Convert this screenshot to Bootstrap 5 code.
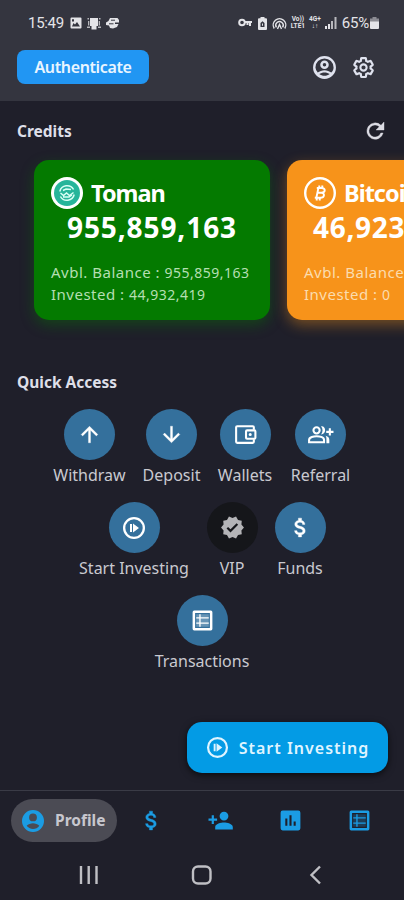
<!DOCTYPE html>
<html lang="en">
<head>
<meta charset="utf-8">
<meta name="viewport" content="width=device-width, initial-scale=1">
<title>Profile</title>
<link rel="stylesheet" href="https://cdn.jsdelivr.net/npm/bootstrap@5.3.0/dist/css/bootstrap.min.css">
<style>
body{background:#1f1f2a;font-family:"Noto Sans","Open Sans",sans-serif;color:#dcdce4}
svg{display:block;flex:none}
svg:not([fill]){fill:currentColor}
.screen{width:404px;height:900px}
.top-area{height:101px;background:#34353f}
.status{height:46px;padding:0 25px 0 28px;font:15px/46px Roboto,sans-serif;color:#e4e4e8}
.status-time{width:36px;margin-right:6px;letter-spacing:-.3px}
.status svg+svg{margin-left:5px}
.net-label{font:bold 6.5px/7px Roboto,sans-serif;text-align:center;margin-left:4px}
.battery-text{margin:0 1px 0 5px;letter-spacing:-.2px}
.head-row{margin-top:4px}
.auth-btn{width:132px;height:34px;margin-left:17px;border-radius:8px;background:#2196f3;color:#e9f5ff;font-size:16px;font-weight:600;letter-spacing:-.36px}
.auth-btn:hover{background:#1e88e5;color:#fff}
.head-icons{gap:14px;margin-right:28px;color:#dfe2ee}
.sec-title{font-size:15.5px;font-weight:700;line-height:22px;margin:0 0 0 17px;color:#dedfe8}
.credits-head{height:59px;padding-right:17px}
.cards{gap:17px;padding-left:34px;height:160px}
.fund{flex:none;width:236px;height:160px;border-radius:15px;padding:16px 17px;color:#fff}
.fund svg{margin-top:1px}
.fund-green{background:#047a00;box-shadow:0 5px 14px rgba(4,122,0,.4)}
.fund-orange{background:#f7931a;box-shadow:0 5px 14px rgba(247,147,26,.4)}
.fund-name{font-size:23.5px;font-weight:700;line-height:34px;margin-left:8px;letter-spacing:-1px}
.fund-sum{font-size:28px;font-weight:700;line-height:34px;letter-spacing:.9px;text-align:center;white-space:nowrap}
.fund-orange .fund-sum{text-align:left;padding-left:9px;letter-spacing:.7px}
.fund-info{font-size:15px;line-height:21.5px;margin-top:18px;white-space:nowrap;letter-spacing:.5px}
.fund-green .fund-info{color:#b5dfb2}
.fund-orange .fund-info{color:#fbdcae}
.fund-info small{font-size:14px;letter-spacing:.5px}
.quick-area{margin-top:51px}
.quick{gap:17px;height:93px}
.quick-item{height:93px}
.disc{width:51px;height:51px;border-radius:50%;background:#34709c;color:#fff}
.disc-dark{background:#15161a;color:#b4b4b7}
.quick-label{font-size:16px;line-height:22px;margin-top:4px;white-space:nowrap;color:#c9c9d0}
.w57{width:57px}.w73{width:73px}.w56{width:56px}.w61{width:61px}.w111{width:111px}.w51{width:51px}
.invest-btn{width:201px;height:51px;margin:34px 16px 0 0;border-radius:15px;background:#039be5;color:#dff4ff;box-shadow:0 2px 7px rgba(0,0,0,.65);font-size:16px;font-weight:600;letter-spacing:1px;gap:10px}
.invest-btn:hover{background:#0288d1;color:#fff}
.tabs{height:60px;margin-top:17px;border-top:1px solid #3a3b46;padding:0 32px 0 11px;color:#1b9ce3}
.tab-on{width:106px;height:43px;border-radius:22px;background:#4b4b54;font-size:15.5px;font-weight:700;padding-left:10px;gap:10px}
.tab-on span{color:#c7c7ce}
.tab-icons{gap:44.5px}
.sysbar{height:49px;color:#bfbfc4}
</style>
</head>
<body>
<svg width="0" height="0" class="position-absolute">
<defs>
<symbol id="i-play" viewBox="0 0 24 24"><path fill-rule="evenodd" d="M12 1a11 11 0 1 0 0 22 11 11 0 0 0 0-22zm0 2.300a8.700 8.700 0 1 1 0 17.400 8.700 8.700 0 0 1 0-17.400z"/><path d="M8 8h2v8H8zM11 7.500v9l6-4.500z"/></symbol>
<symbol id="i-dollar" viewBox="0 0 24 24"><path stroke="currentColor" stroke-width=".4" d="M11.800 10.900c-2.270-.59-3-1.200-3-2.150 0-1.090 1.010-1.850 2.700-1.850 1.780 0 2.440.85 2.500 2.100h2.210c-.07-1.720-1.120-3.300-3.210-3.810V3h-3v2.160c-1.940.42-3.500 1.680-3.500 3.610 0 2.310 1.910 3.460 4.700 4.130 2.500.6 3 1.480 3 2.410 0 .69-.49 1.790-2.700 1.790-2.060 0-2.870-.92-2.980-2.100h-2.200c.12 2.190 1.760 3.420 3.680 3.830V21h3v-2.150c1.950-.37 3.500-1.500 3.500-3.550 0-2.840-2.430-3.810-4.700-4.400z"/></symbol>
<symbol id="i-list" viewBox="0 0 24 24"><path fill-rule="evenodd" d="M4 2.500h16A1.500 1.500 0 0 1 21.500 4v16a1.500 1.500 0 0 1-1.500 1.500H4A1.500 1.500 0 0 1 2.500 20V4A1.500 1.500 0 0 1 4 2.500zM4.900 4.900v14.200h14.200V4.900z"/><path d="M6 6h12v12H6z" opacity=".25"/><path d="M8.900 6h1.300v12H8.900zM6 8.800h12V10H6zm0 5h12V15H6z"/></symbol>
</defs>
</svg>
<main class="screen overflow-hidden d-flex flex-column">
<header class="top-area">
  <div class="status d-flex align-items-center">
    <span class="status-time">15:49</span>
    <svg width="12" height="12" viewBox="0 0 12 12"><path fill-rule="evenodd" d="M1.500.5h9a1 1 0 0 1 1 1v9a1 1 0 0 1-1 1h-9a1 1 0 0 1-1-1v-9a1 1 0 0 1 1-1zM2 9.500h8L7 5 5 7.500 3.500 6zM2 2.200v2.300h2V2.200z"/></svg>
    <svg width="14" height="13" viewBox="0 0 14 13"><path d="M3 1h8v8H9.500v3.500h-5V9H3z"/><path d="M.5 1H2v1.500H.5zM1 4h1.300v4.500H1zM12 1h1.500v1.500H12zm-.3 3H13v4.500h-1.300zM0 9.500h3V11H0zm11 0h3V11h-3z" opacity=".75"/></svg>
    <svg width="13" height="12" viewBox="0 0 13 12"><path d="M4 1h7.500L13 3v2.500H9V7h3.500l-1.500 3-4 1.500-3-.5L3 8.500 0 8V5.500L2.500 4z"/><path d="M5 3.200h4M3 6.800h4.500" stroke="#34353f"/></svg>
    <div class="ms-auto d-flex align-items-center">
      <svg width="15" height="10" viewBox="0 0 15 10" fill="none" stroke="currentColor" stroke-width="2"><circle cx="4" cy="4.500" r="2.800"/><path d="M7 4h7M12 4v4M9.500 4.500v2.500"/></svg>
      <svg width="9" height="13" viewBox="0 0 9 13"><path fill-rule="evenodd" d="M2.500 0h4v1.300H8A1 1 0 0 1 9 2.300V12a1 1 0 0 1-1 1H1a1 1 0 0 1-1-1V2.300a1 1 0 0 1 1-1h1.500zM2.500 6v4h4V6l-2-1.800zM4 6.500h1v2.300H4z"/></svg>
      <svg width="15" height="13" viewBox="0 0 15 13" fill="none" stroke="currentColor" stroke-width="1.400"><path d="M2.200 11.500a6.300 6.300 0 1 1 10.600 0M4.400 10.300a3.700 3.700 0 1 1 6.200 0M5.500 12l2-4.500 2 4.500"/></svg>
      <div class="net-label">Vo))<br>LTE1</div>
      <div class="net-label">4G+<br>↓↑</div>
      <svg width="12" height="12" viewBox="0 0 12 12" class="ms-1"><path d="M0 9h2v3H0zM3 7h2v5H3z"/><path d="M6 4h2v8H6zM9.500 0h2v12h-2z" opacity=".75"/></svg>
      <span class="battery-text">65%</span>
      <svg width="9" height="12" viewBox="0 0 9 12"><path d="M2.500 0h4v1.500H9V5H0V1.500h2.500z" opacity=".5"/><path d="M0 4.500h9V11a1 1 0 0 1-1 1H1a1 1 0 0 1-1-1z"/></svg>
    </div>
  </div>
  <div class="head-row d-flex align-items-center justify-content-between">
    <button class="btn auth-btn p-0 border-0">Authenticate</button>
    <div class="head-icons d-flex">
      <svg width="25" height="25" viewBox="0 0 24 24"><path fill-rule="evenodd" d="M12 1a11 11 0 1 0 0 22 11 11 0 0 0 0-22zM7 18.300c1.400-1 3.100-1.600 5-1.600s3.600.6 5 1.600c-1.400 1-3.100 1.700-5 1.700s-3.600-.7-5-1.700zm11.500-1.400C16.700 15.500 14.500 14.600 12 14.600s-4.700.9-6.500 2.300A8.400 8.400 0 0 1 3.300 12a8.700 8.700 0 1 1 17.400 0c0 1.900-.8 3.600-2.200 4.900zM12 5.300a4.100 4.100 0 1 0 0 8.200 4.100 4.100 0 0 0 0-8.200zm0 2.400a1.700 1.700 0 1 1 0 3.400 1.700 1.700 0 0 1 0-3.400z"/></svg>
      <svg width="25" height="25" viewBox="0 0 24 24" fill="none" stroke="currentColor"><path d="M19.430 12.980c.04-.32.070-.64.070-.98s-.03-.66-.07-.98l2.110-1.650c.19-.15.24-.42.12-.64l-2-3.460c-.12-.22-.39-.3-.61-.22l-2.490 1c-.52-.4-1.080-.73-1.690-.98l-.38-2.650A.49.490 0 0 0 14 2h-4c-.25 0-.46.18-.49.42l-.38 2.650c-.61.25-1.170.59-1.690.98l-2.490-1c-.23-.09-.49 0-.61.22l-2 3.460c-.13.22-.07.49.12.64l2.110 1.650c-.04.32-.07.65-.07.98s.03.66.070.98l-2.110 1.650c-.19.15-.24.42-.12.64l2 3.460c.12.22.39.3.61.22l2.490-1c.52.4 1.080.73 1.690.98l.38 2.650c.03.24.24.42.49.42h4c.25 0 .46-.18.490-.42l.38-2.650c.61-.25 1.170-.59 1.690-.98l2.490 1c.23.09.49 0 .61-.22l2-3.460c.12-.22.070-.49-.12-.64z" stroke-width="2.300" transform="translate(1.100 1.100) scale(.91)"/><circle cx="12" cy="12" r="3" stroke-width="2"/></svg>
    </div>
  </div>
</header>

<section>
  <div class="credits-head d-flex align-items-center justify-content-between">
    <h2 class="sec-title">Credits</h2>
    <svg width="24" height="24" viewBox="0 0 24 24"><path stroke="currentColor" stroke-width=".4" d="M18 6.350A8.200 8.200 0 1 0 20.100 14h-2.300A6.100 6.100 0 1 1 12 5.900c1.700 0 3.200.7 4.250 1.800L13 11h8V3z"/></svg>
  </div>
  <div class="cards d-flex">
    <article class="fund fund-green">
      <div class="d-flex">
        <svg width="32" height="32" viewBox="0 0 32 32"><circle cx="16" cy="16" r="16"/><circle cx="16" cy="16" r="13" fill="#26b59a"/><path d="M8.800 14.500a7.500 7.500 0 0 1 13.800-2M23.200 17.500a7.500 7.500 0 0 1-13.800 2M9.500 16l3 2.500 3-2.500 3 2.500 4-3M12 13.500l3-1.500 5 .5M12 20h6l3-2" fill="none" stroke="#d9fff5" stroke-width="1.500"/></svg>
        <div class="fund-name">Toman</div>
      </div>
      <div class="fund-sum">955,859,163</div>
      <div class="fund-info">Avbl. Balance : <small>955,859,163</small><br>Invested : <small>44,932,419</small></div>
    </article>
    <article class="fund fund-orange">
      <div class="d-flex">
        <svg width="32" height="32" viewBox="0 0 32 32" fill="none" stroke="currentColor"><circle cx="16" cy="16" r="14.800" stroke-width="2.400"/><path d="M14.500 10.500 12.300 21M10.800 20.800h5.500c4.500 0 4.800-4.700 1.200-5 4.300-.2 4.200-4.800.3-4.800h-5M13.500 15.800h4M15.500 8.500 15 11M18.500 8.500 18 11M13 21l-.5 2.500M16 21l-.5 2.500" stroke-width="1.900"/></svg>
        <div class="fund-name">Bitcoin</div>
      </div>
      <div class="fund-sum">46,923</div>
      <div class="fund-info">Avbl. Balance : <small>46,923</small><br>Invested : <small>0</small></div>
    </article>
  </div>
</section>

<section class="quick-area">
  <h2 class="sec-title">Quick Access</h2>
  <div class="quick d-flex justify-content-center mt-3">
    <div class="quick-item w73 d-flex flex-column align-items-center">
      <div class="disc d-flex align-items-center justify-content-center"><svg width="25" height="25" viewBox="0 0 24 24"><path stroke="currentColor" stroke-width=".3" d="m4 12 1.410 1.410L11 7.830V20h2V7.830l5.580 5.590L20 12l-8-8z"/></svg></div>
      <div class="quick-label">Withdraw</div>
    </div>
    <div class="quick-item w57 d-flex flex-column align-items-center">
      <div class="disc d-flex align-items-center justify-content-center"><svg width="25" height="25" viewBox="0 0 24 24"><path stroke="currentColor" stroke-width=".3" d="m20 12-1.410-1.410L13 16.170V4h-2v12.170l-5.580-5.590L4 12l8 8z"/></svg></div>
      <div class="quick-label">Deposit</div>
    </div>
    <div class="quick-item w56 d-flex flex-column align-items-center">
      <div class="disc d-flex align-items-center justify-content-center"><svg width="25" height="25" viewBox="0 0 24 24" fill="none" stroke="currentColor" stroke-width="2"><path d="M20 7.500V5a1 1 0 0 0-1-1H4a1 1 0 0 0-1 1v14a1 1 0 0 0 1 1h15a1 1 0 0 0 1-1v-2.500"/><rect x="12.500" y="8" width="9" height="8" rx="1"/><circle cx="16.500" cy="12" r=".8" stroke-width="1.400"/></svg></div>
      <div class="quick-label">Wallets</div>
    </div>
    <div class="quick-item w61 d-flex flex-column align-items-center">
      <div class="disc d-flex align-items-center justify-content-center"><svg width="27" height="25" viewBox="0 0 26 24"><path d="M2 19.500v-2.200c0-2.700 4.500-3.600 7.200-3.600s7.200.9 7.200 3.600v2.200z" fill="none" stroke="currentColor" stroke-width="2"/><circle cx="9.200" cy="8" r="3" fill="none" stroke="currentColor" stroke-width="2"/><path d="M13.500 4c4.800-.8 5.800 7.300 0 8 2-2.400 2-5.700 0-8zM17.800 13.300c2.700.7 3.700 2 3.700 3.800v3.400h-2.800v-3.700c0-1.400-.1-2.600-.9-3.500zM21 6h2v2.500h2.500v2H23V13h-2v-2.500h-2.500v-2H21z"/></svg></div>
      <div class="quick-label">Referral</div>
    </div>
  </div>
  <div class="quick d-flex justify-content-center">
    <div class="quick-item w111 d-flex flex-column align-items-center">
      <div class="disc d-flex align-items-center justify-content-center"><svg width="24" height="24"><use href="#i-play"/></svg></div>
      <div class="quick-label">Start Investing</div>
    </div>
    <div class="quick-item w51 d-flex flex-column align-items-center">
      <div class="disc disc-dark d-flex align-items-center justify-content-center"><svg width="25" height="25" viewBox="0 0 24 24"><path d="m23 12-2.440-2.790.34-3.690-3.610-.82-1.890-3.200L12 2.960 8.600 1.500 6.710 4.690 3.100 5.500l.34 3.700L1 12l2.440 2.790-.34 3.700 3.610.82L8.600 22.500l3.400-1.470 3.400 1.460 1.890-3.190 3.610-.82-.34-3.690zm-12.910 4.720-3.800-3.810 1.480-1.480 2.320 2.330 5.850-5.870 1.480 1.480z"/></svg></div>
      <div class="quick-label">VIP</div>
    </div>
    <div class="quick-item w51 d-flex flex-column align-items-center">
      <div class="disc d-flex align-items-center justify-content-center"><svg width="25" height="25"><use href="#i-dollar"/></svg></div>
      <div class="quick-label">Funds</div>
    </div>
  </div>
  <div class="quick d-flex justify-content-center">
    <div class="quick-item d-flex flex-column align-items-center">
      <div class="disc d-flex align-items-center justify-content-center"><svg width="25" height="25"><use href="#i-list"/></svg></div>
      <div class="quick-label">Transactions</div>
    </div>
  </div>
</section>

<button class="btn invest-btn border-0 p-0 d-flex align-items-center justify-content-center align-self-end flex-shrink-0"><svg width="23" height="23"><use href="#i-play"/></svg><span>Start Investing</span></button>

<nav class="tabs d-flex align-items-center justify-content-between flex-shrink-0">
  <div class="tab-on d-flex align-items-center">
    <svg width="24" height="24" viewBox="0 0 24 24"><path fill-rule="evenodd" d="M12 1a11 11 0 1 0 0 22 11 11 0 0 0 0-22zm0 3.500a3.900 3.900 0 1 1 0 7.800 3.900 3.900 0 0 1 0-7.800zM12 20c-2.600 0-4.900-1.200-6.300-3.200 1.200-1.600 4.200-2.500 6.300-2.500s5.100.9 6.300 2.500A7.800 7.800 0 0 1 12 20z"/></svg>
    <span>Profile</span>
  </div>
  <div class="tab-icons d-flex">
    <svg width="25" height="25"><use href="#i-dollar"/></svg>
    <svg width="25" height="25" viewBox="0 0 25 24"><path d="M16 12a4.400 4.400 0 1 0 0-8.800 4.400 4.400 0 0 0 0 8.800zm0 2c-3 0-8.800 1.400-8.800 4.400V21h17.600v-2.600c0-3-5.800-4.400-8.800-4.400zM5.900 10V6.800H3.700V10H.5v2.200h3.200v3.200h2.200v-3.200h3.200V10z"/></svg>
    <svg width="25" height="25" viewBox="0 0 24 24"><path fill-rule="evenodd" d="M4.500 2.500h15a2 2 0 0 1 2 2v15a2 2 0 0 1-2 2h-15a2 2 0 0 1-2-2v-15a2 2 0 0 1 2-2zM7 10v7h2v-7zm4-3v10h2V7zm4 6v4h2v-4z"/></svg>
    <svg width="25" height="25"><use href="#i-list"/></svg>
  </div>
</nav>
<div class="sysbar d-flex flex-shrink-0 align-items-center">
  <svg width="404" height="49" viewBox="0 0 404 49" fill="none" stroke="currentColor" stroke-width="2.400"><path d="M81 16v18M88.700 16v18M96.500 16v18"/><rect x="193" y="16.500" width="17.500" height="17" rx="5"/><path d="m320 16.500-8.500 8.500 8.500 8.500"/></svg>
</div>
</main>
<script src="https://cdn.jsdelivr.net/npm/bootstrap@5.3.0/dist/js/bootstrap.bundle.min.js"></script>
</body>
</html>
